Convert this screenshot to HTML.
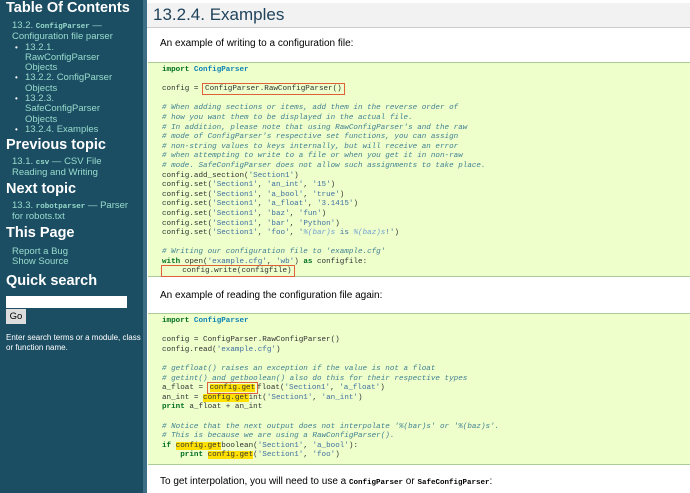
<!DOCTYPE html>
<html><head><style>
body{margin:0;width:690px;height:493px;overflow:hidden;font-family:"Liberation Sans",sans-serif;background:#fff;position:relative}
#side{position:absolute;left:0;top:0;width:143px;height:493px;background:#1c4e63;color:#fff}
#strip{position:absolute;left:143px;top:0;width:4px;height:493px;background:#3e6e85}
#side h3{font-size:14.5px;margin:0;font-weight:bold;color:#fff;position:absolute;left:6px;line-height:17px}
#side a{color:#98dbcc;font-size:9.5px;text-decoration:none}
#side .blk{position:absolute;left:12px;font-size:9.5px;line-height:10.3px;white-space:nowrap}
#side ul{margin:0;padding:0 0 0 13px;list-style:none}
#side li{position:relative}
#side li:before{content:"•";position:absolute;left:-10px;top:0;color:#fff;font-size:8px}
#side .mono{font-family:"Liberation Mono",monospace;font-size:7.5px;font-weight:bold}
#main{position:absolute;left:147px;top:0;right:0}
h1{position:absolute;left:0;right:0;top:3px;height:24px;margin:0;background:#f2f2f2;border-bottom:1px solid #ccc;color:#20435c;font-weight:normal;font-size:17px;line-height:24px;padding-left:6px;font-family:"Liberation Sans",sans-serif}
p{position:absolute;left:13px;margin:0;font-size:10px;color:#000}
pre{position:absolute;left:1px;right:0;margin:0;background:#eeffcc;border-top:1px solid #ac9;border-bottom:1px solid #ac9;font-family:"Liberation Mono",monospace;font-size:7.6px;line-height:9.6px;color:#333;padding:3px 0 0 14px}
.k{color:#007020;font-weight:bold}.n{color:#0e84b5;font-weight:bold}.c{color:#408090;font-style:italic}.s{color:#4070a0}.i{color:#70a0d0;font-style:italic}
.box{border:1.5px solid #e0603a;margin:-2px -1px;padding:1px 2px}
.hl{background:#ffe000}
.cp{font-family:"Liberation Mono",monospace;font-size:7.5px;font-weight:bold}
</style></head><body>
<div id="side">
<h3 style="top:0px">Table Of Contents</h3>
<div class="blk" style="top:21px"><a>13.2. <span class="mono">ConfigParser</span> —<br>Configuration file parser</a>
<ul><li><a>13.2.1.<br>RawConfigParser<br>Objects</a></li><li><a>13.2.2. ConfigParser<br>Objects</a></li><li><a>13.2.3.<br>SafeConfigParser<br>Objects</a></li><li><a>13.2.4. Examples</a></li></ul></div>
<h3 style="top:137px">Previous topic</h3>
<div class="blk" style="top:157px"><a>13.1. <span class="mono">csv</span> — CSV File<br>Reading and Writing</a></div>
<h3 style="top:181px">Next topic</h3>
<div class="blk" style="top:201px"><a>13.3. <span class="mono">robotparser</span> — Parser<br>for robots.txt</a></div>
<h3 style="top:225px">This Page</h3>
<div class="blk" style="top:247px"><a>Report a Bug</a><br><a>Show Source</a></div>
<h3 style="top:273px">Quick search</h3>
<div style="position:absolute;left:6px;top:296px;width:121px;height:12px;background:#fff"></div>
<div style="position:absolute;left:6px;top:309px;width:20px;height:15px;background:#ddd;color:#000;font-size:9.5px;line-height:15px;text-align:center">Go</div>
<div style="position:absolute;left:6px;top:333px;width:135px;font-size:8px;line-height:10px;color:#fff">Enter search terms or a module, class or function name.</div>
</div>
<div id="strip"></div>
<div id="main">
<h1>13.2.4. Examples</h1>
<p style="top:38px">An example of writing to a configuration file:</p>
<pre style="top:62px;height:210px"><span class="k">import</span> <span class="n">ConfigParser</span>

config = <span class="box">ConfigParser.RawConfigParser()</span>

<span class="c"># When adding sections or items, add them in the reverse order of
# how you want them to be displayed in the actual file.
# In addition, please note that using RawConfigParser's and the raw
# mode of ConfigParser's respective set functions, you can assign
# non-string values to keys internally, but will receive an error
# when attempting to write to a file or when you get it in non-raw
# mode. SafeConfigParser does not allow such assignments to take place.</span>
config.add_section(<span class="s">'Section1'</span>)
config.set(<span class="s">'Section1'</span>, <span class="s">'an_int'</span>, <span class="s">'15'</span>)
config.set(<span class="s">'Section1'</span>, <span class="s">'a_bool'</span>, <span class="s">'true'</span>)
config.set(<span class="s">'Section1'</span>, <span class="s">'a_float'</span>, <span class="s">'3.1415'</span>)
config.set(<span class="s">'Section1'</span>, <span class="s">'baz'</span>, <span class="s">'fun'</span>)
config.set(<span class="s">'Section1'</span>, <span class="s">'bar'</span>, <span class="s">'Python'</span>)
config.set(<span class="s">'Section1'</span>, <span class="s">'foo'</span>, <span class="s">'<span class="i">%(bar)s</span> is <span class="i">%(baz)s</span>!'</span>)

<span class="c"># Writing our configuration file to 'example.cfg'</span>
<span class="k">with</span> open(<span class="s">'example.cfg'</span>, <span class="s">'wb'</span>) <span class="k">as</span> configfile:
<span class="box">    config.write(configfile)</span></pre>
<p style="top:290px">An example of reading the configuration file again:</p>
<pre style="top:313px;height:147px"><span class="k">import</span> <span class="n">ConfigParser</span>

config = ConfigParser.RawConfigParser()
config.read(<span class="s">'example.cfg'</span>)

<span class="c"># getfloat() raises an exception if the value is not a float
# getint() and getboolean() also do this for their respective types</span>
a_float = <span class="box"><span class="hl">config.get</span></span>float(<span class="s">'Section1'</span>, <span class="s">'a_float'</span>)
an_int = <span class="hl">config.get</span>int(<span class="s">'Section1'</span>, <span class="s">'an_int'</span>)
<span class="k">print</span> a_float + an_int

<span class="c"># Notice that the next output does not interpolate '%(bar)s' or '%(baz)s'.
# This is because we are using a RawConfigParser().</span>
<span class="k">if</span> <span class="hl">config.get</span>boolean(<span class="s">'Section1'</span>, <span class="s">'a_bool'</span>):
    <span class="k">print</span> <span class="hl">config.get</span>(<span class="s">'Section1'</span>, <span class="s">'foo'</span>)</pre>
<p style="top:476px">To get interpolation, you will need to use a <span class="cp">ConfigParser</span> or <span class="cp">SafeConfigParser</span>:</p>
</div>
</body></html>
